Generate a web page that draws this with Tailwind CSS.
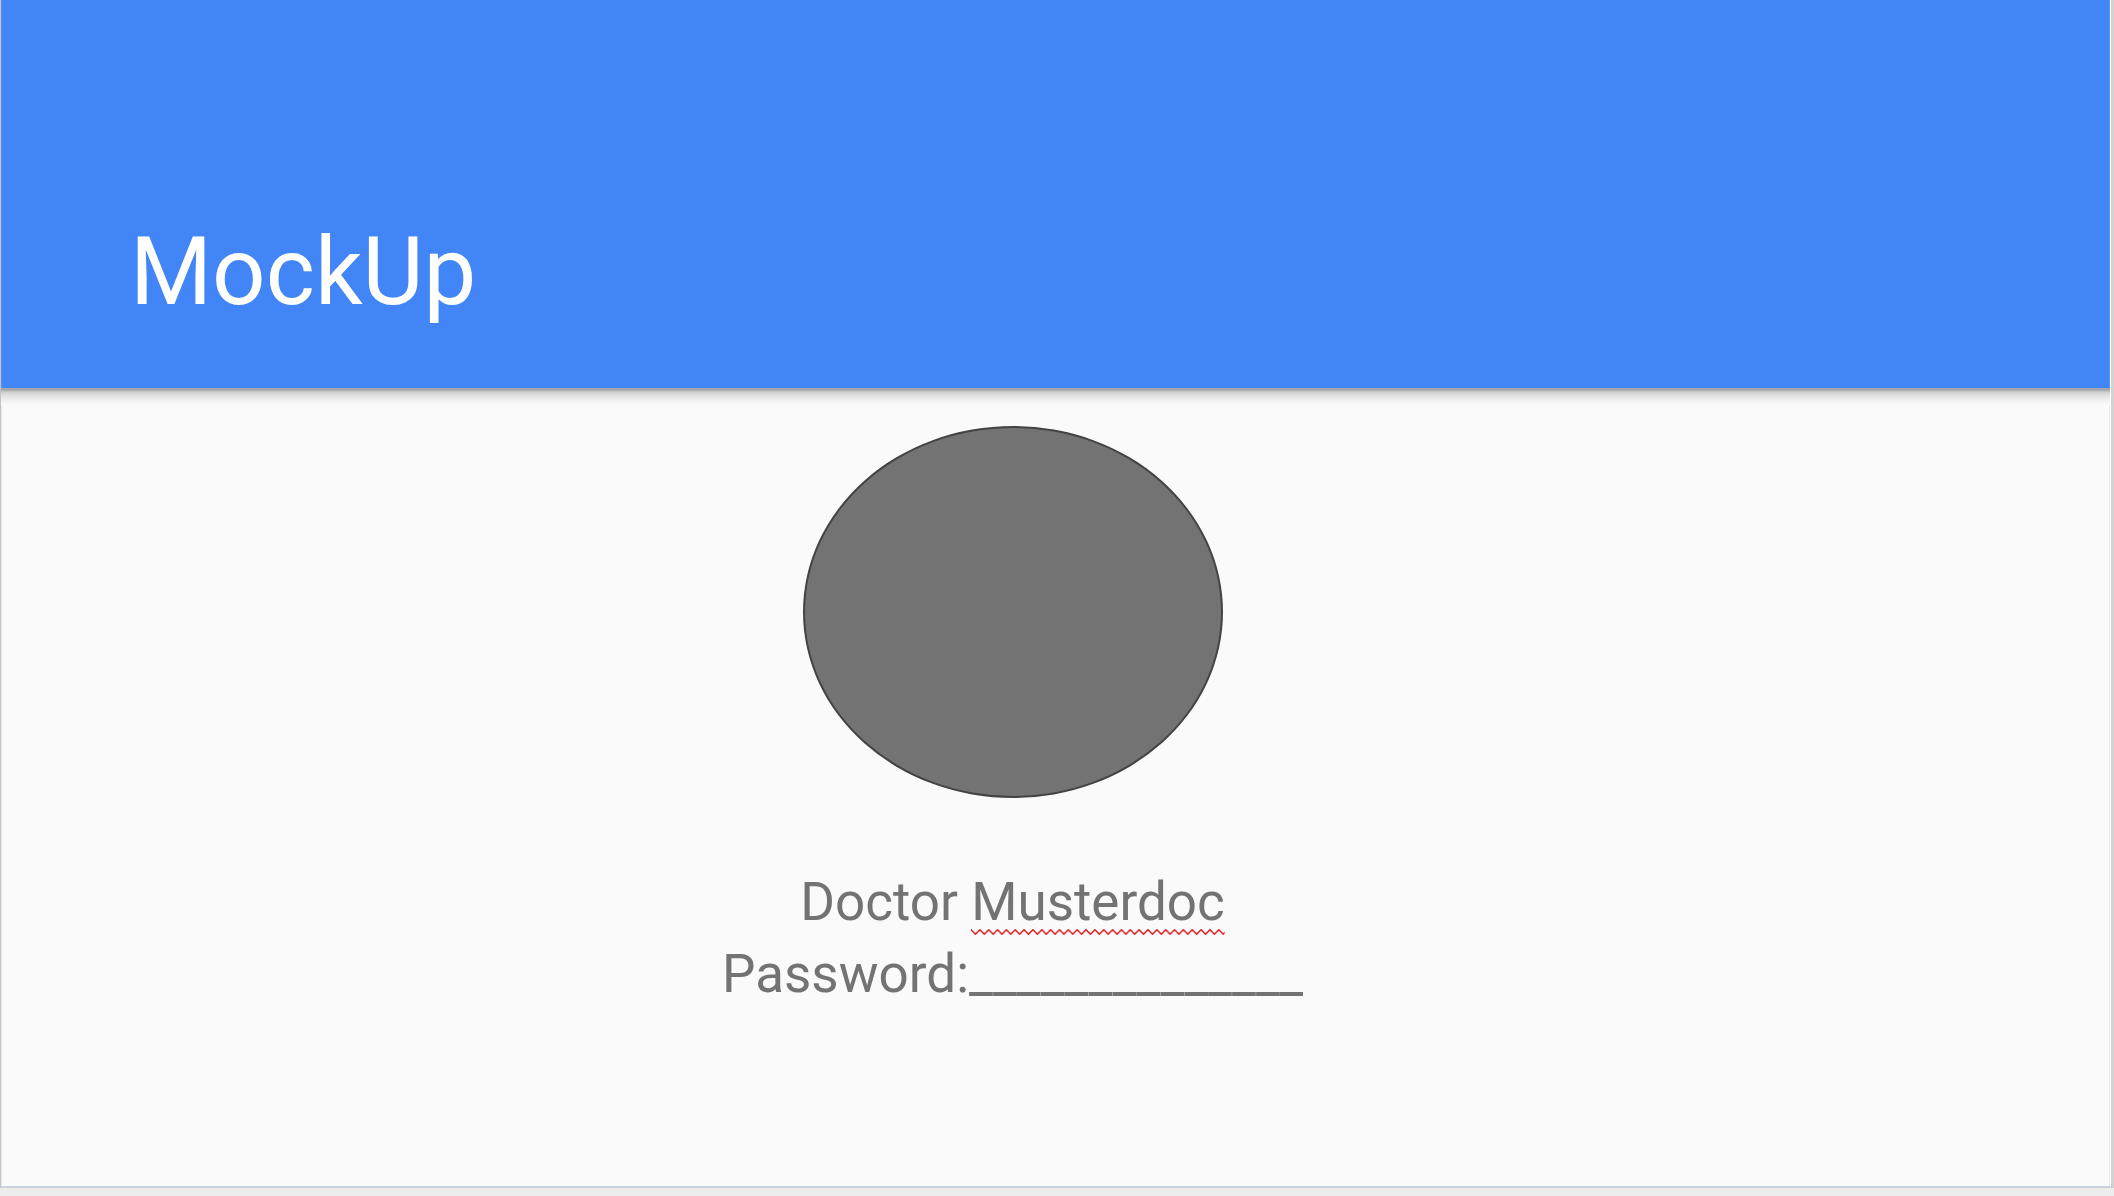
<!DOCTYPE html>
<html lang="de">
<head>
<meta charset="utf-8">
<title>MockUp</title>
<script src="https://cdn.jsdelivr.net/npm/@tailwindcss/browser@4"></script>
</head>
<body class="min-h-screen flex flex-col bg-[#ededed] font-[Roboto,sans-serif]">
  <div class="flex-1 flex flex-col mb-2 border-l border-l-[#c4c4c4] border-r-3 border-r-[#d2d2d2] border-b border-b-[#cfcfcf]">
    <main class="flex-1 flex flex-col bg-[#fafafa] border-r border-r-white border-b border-b-[#c7d5ea]">
      <header class="h-[388px] shrink-0 flex items-end bg-[#4285f6] border-x border-x-[#5a93ee] px-32 pb-[60px]">
        <h1 class="text-[94px] leading-[112px] text-white">MockUp</h1>
      </header>
      <div class="h-[18px] shrink-0 bg-[linear-gradient(#a5a6aa_0px,#a8a9ac_2px,#b8b8b8_3px,#cfcfcf_4px,#dadada_6px,#e9e9e9_10px,#f5f5f5_14px,#fafafa_18px)]"></div>
      <section class="flex-1 flex flex-col items-center border-x border-x-[#dfe7f3] pt-5 pr-[86px] text-[53px] leading-[72px] text-[#737373]">
        <div class="w-[420px] h-[372px] rounded-[50%] bg-[#737373] border-2 border-[#434343]"></div>
        <p class="mt-[68px]">Doctor <span class="relative inline-block">Musterdoc<svg class="absolute left-0 bottom-[3px] w-full h-[6px]" aria-hidden="true"><defs><pattern id="zigzag" width="8.85" height="6" patternUnits="userSpaceOnUse"><path d="M-1 -.3L0 .7L4.425 5.2L8.85 .7L9.85 -.3" fill="none" stroke="#e0191c" stroke-width="1.5"/></pattern></defs><rect width="100%" height="6" fill="url(#zigzag)"/></svg></span></p>
        <div class="flex">
          <label for="password">Password:</label>
          <input id="password" type="text" value="______________" class="w-[334px] h-[72px] p-0 bg-transparent outline-none">
        </div>
      </section>
    </main>
  </div>
</body>
</html>
